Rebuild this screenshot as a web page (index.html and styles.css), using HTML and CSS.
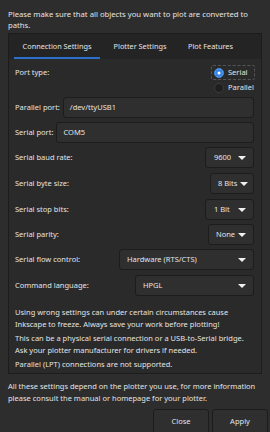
FILE: index.html
```html
<!DOCTYPE html>
<html lang="en">
<head>
    <meta charset="UTF-8">
    <meta name="viewport" content="width=device-width, initial-scale=1.0">
    <title>Plot - Connection Settings</title>
    <link rel="stylesheet" href="styles.css">
</head>
<body>

    <p class="intro">Please make sure that all objects you want to plot are converted to paths.</p>

    <!-- Notebook with tabs -->
    <div class="notebook">
        <div class="tabs">
            <div class="tab active">Connection Settings</div>
            <div class="tab second">Plotter Settings</div>
            <div class="tab third">Plot Features</div>
        </div>

        <div class="page">
            <div class="row port-row">
                <span class="label">Port type:</span>
                <div class="radios">
                    <div class="radio checked focused"><span class="dot"></span>Serial</div>
                    <div class="radio"><span class="dot"></span>Parallel</div>
                </div>
            </div>

            <div class="row">
                <span class="label">Parallel port:</span>
                <div class="entry">/dev/ttyUSB1</div>
            </div>
            <div class="row">
                <span class="label">Serial port:</span>
                <div class="entry">COM5</div>
            </div>

            <div class="row loose">
                <span class="label">Serial baud rate:</span>
                <div class="combo w-baud">9600<span class="arrow"></span></div>
            </div>
            <div class="row loose">
                <span class="label">Serial byte size:</span>
                <div class="combo w-byte">8 Bits<span class="arrow"></span></div>
            </div>
            <div class="row">
                <span class="label">Serial stop bits:</span>
                <div class="combo w-stop">1 Bit<span class="arrow"></span></div>
            </div>
            <div class="row">
                <span class="label">Serial parity:</span>
                <div class="combo w-parity">None<span class="arrow"></span></div>
            </div>
            <div class="row loose">
                <span class="label">Serial flow control:</span>
                <div class="combo w-flow">Hardware (RTS/CTS)<span class="arrow"></span></div>
            </div>
            <div class="row">
                <span class="label">Command language:</span>
                <div class="combo w-lang">HPGL<span class="arrow"></span></div>
            </div>

            <div class="notes">
                <p>Using wrong settings can under certain circumstances cause Inkscape to freeze. Always save your work before plotting!</p>
                <p>This can be a physical serial connection or a USB-to-Serial bridge. Ask your plotter manufacturer for drivers if needed.</p>
                <p>Parallel (LPT) connections are not supported.</p>
            </div>
        </div>
    </div>

    <p class="outro">All these settings depend on the plotter you use, for more information please consult the manual or homepage for your plotter.</p>

    <div class="buttons">
        <button class="btn">Close</button>
        <button class="btn">Apply</button>
    </div>

</body>
</html>
```

FILE: styles.css
```css
:root {
    --bg: #2d2d2d;
    --page: #2a2a2a;
    --tabbar: #242424;
    --field: #2f2f2f;
    --edge: #1c1c1c;
    --text: #e4e4e4;
    --blue: #2a6fc9;
}
body {
    margin: 0;
    background-color: var(--bg);
    color: var(--text);
    font-family: "Noto Sans", sans-serif;
    font-size: 7.5px;
    line-height: 11px;
    height: 432px;
    overflow: hidden;
}
p {
    margin: 0;
}
.intro {
    padding: 9px 8px 2px 8px;
    font-size: 7.7px;
}
.notebook {
    margin: 0 8px;
    border: 1px solid var(--edge);
    background-color: var(--page);
}
.tabs {
    display: flex;
    height: 25px;
    background-color: var(--tabbar);
    padding-left: 5px;
}
.tab {
    display: flex;
    align-items: center;
    justify-content: center;
    font-size: 7.3px;
    box-sizing: border-box;
}
.tab.active {
    width: 86px;
    border-bottom: 2px solid var(--blue);
    padding-top: 2px;
}
.tab.second {
    width: 80px;
}
.tab.third {
    width: 61px;
}
.page {
    padding: 6px 7px 2px 6px;
}
.row {
    display: flex;
    align-items: center;
    gap: 3px;
    height: 21px;
    margin-bottom: 4px;
}
.row.loose {
    margin-bottom: 5px;
}
.port-row {
    align-items: flex-start;
    height: 30px;
    margin-bottom: 2px;
}
.port-row .label {
    margin-top: 2px;
}
.label {
    white-space: nowrap;
}
.radios {
    margin-left: auto;
    margin-right: -1px;
    width: 44px;
    display: flex;
    flex-direction: column;
}
.radio {
    display: flex;
    align-items: center;
    gap: 4px;
    height: 13px;
    padding-left: 2px;
    border: 1px dashed transparent;
    border-radius: 2px;
    white-space: nowrap;
}
.radio.focused {
    border-color: #555;
}
.dot {
    width: 8px;
    height: 8px;
    border-radius: 50%;
    border: 1px solid #3c3c3c;
    background-color: #1e1e1e;
}
.radio.checked .dot {
    background-color: #fff;
    border-color: #3584e4;
    box-shadow: inset 0 0 0 2.5px #3584e4;
}
.entry {
    flex: 1;
    height: 21px;
    box-sizing: border-box;
    border: 1px solid var(--edge);
    border-radius: 3px;
    background-color: var(--field);
    display: flex;
    align-items: center;
    padding-left: 6px;
}
.combo {
    margin-left: auto;
    height: 21px;
    box-sizing: border-box;
    border: 1px solid var(--edge);
    border-radius: 3px;
    background-color: var(--field);
    display: flex;
    align-items: center;
    padding: 0 7px;
    white-space: nowrap;
}
.arrow {
    margin-left: auto;
    width: 0;
    height: 0;
    border-left: 4px solid transparent;
    border-right: 4px solid transparent;
    border-top: 4px solid #f0f0f0;
}
.w-baud { width: 49px; padding-left: 8px; }
.w-byte { width: 44px; padding-left: 7px; }
.w-stop { width: 49px; padding-left: 8px; }
.w-parity { width: 46px; padding-left: 7px; }
.w-flow { width: 135px; }
.w-lang { width: 119px; }
.w-byte .arrow, .w-parity .arrow {
    margin-left: 3px;
}
.notes {
    padding-top: 7px;
    line-height: 11.5px;
}
.notes p {
    margin-bottom: 3px;
}
.notes p:last-child {
    margin-bottom: 0;
}
.outro {
    padding: 6px 8px 5px 8px;
    line-height: 12px;
}
.buttons {
    display: flex;
    justify-content: flex-end;
    gap: 3px;
    padding-right: 2px;
}
.btn {
    width: 56px;
    height: 25px;
    background-color: #2f2f2f;
    border: 1px solid var(--edge);
    border-radius: 3px;
    color: var(--text);
    font-family: "Noto Sans", sans-serif;
    font-size: 7.5px;
}
```
